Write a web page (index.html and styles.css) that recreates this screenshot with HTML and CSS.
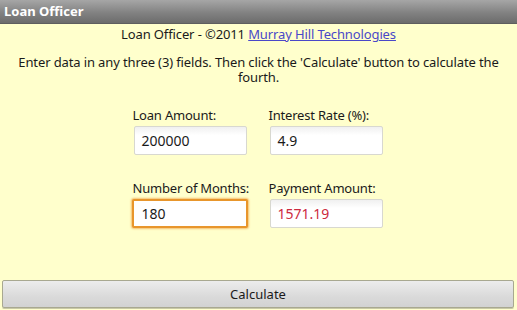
FILE: index.html
```html
<!DOCTYPE html>
<html>
<head>
<meta charset="utf-8">
<link rel="stylesheet" href="styles.css">
</head>
<body>
<div class="app">
  <header class="titlebar">Loan Officer</header>
  <main class="content">
    <p class="credit">Loan Officer - ©2011 <a class="link" href="#">Murray Hill Technologies</a></p>
    <p class="intro">Enter data in any three (3) fields. Then click the 'Calculate' button to calculate the fourth.</p>
    <div class="fields">
      <div class="field">
        <div class="label">Loan Amount:</div>
        <div class="box">200000</div>
      </div>
      <div class="field">
        <div class="label">Interest Rate (%):</div>
        <div class="box">4.9</div>
      </div>
      <div class="field">
        <div class="label">Number of Months:</div>
        <div class="box box-focus">180</div>
      </div>
      <div class="field">
        <div class="label">Payment Amount:</div>
        <div class="box box-result">1571.19</div>
      </div>
    </div>
  </main>
  <div class="actions">
    <button class="calc">Calculate</button>
  </div>
</div>
</body>
</html>
```

FILE: styles.css
```css
html, body {
  margin: 0;
  padding: 0;
}
body {
  background: #ffffcc;
  font-family: "Noto Sans", "Open Sans", "DejaVu Sans", sans-serif;
  font-size: 13px;
  letter-spacing: -0.12px;
  color: #1a1a1a;
}
.app {
  width: 517px;
  height: 310px;
  display: flex;
  flex-direction: column;
  overflow: hidden;
}
.titlebar {
  height: 24px;
  box-sizing: border-box;
  padding: 0 0 0 4px;
  background: linear-gradient(#a6a6a6, #828282 55%, #6c6c6c);
  color: #ffffff;
  font-weight: bold;
  font-size: 13px;
  letter-spacing: 0;
  line-height: 23px;
  border-bottom: 1px solid #5e5e5e;
}
.content {
  flex: 1;
  display: flex;
  flex-direction: column;
  align-items: center;
  padding-top: 2px;
}
.credit {
  margin: 0;
  line-height: 17px;
  text-align: center;
}
.link {
  color: #4a48c8;
  text-decoration: underline;
}
.intro {
  margin: 12px 14px 0;
  line-height: 15px;
  text-align: center;
}
.fields {
  margin-top: 22px;
  display: grid;
  grid-template-columns: 114px 114px;
  column-gap: 22px;
  row-gap: 25px;
  transform: translateX(-1px);
}
.field {
  display: flex;
  flex-direction: column;
  gap: 2px;
}
.label {
  line-height: 17px;
  white-space: nowrap;
  letter-spacing: -0.2px;
}
.box {
  height: 29px;
  box-sizing: border-box;
  margin-left: 1px;
  padding: 0 7px;
  background: linear-gradient(#f0f0f0, #ffffff 30%);
  border: 1px solid #d8d8d0;
  border-radius: 2px;
  font-size: 14px;
  letter-spacing: 0;
  line-height: 27px;
  color: #1a1a1a;
}
.box-focus {
  margin-left: -1px;
  margin-right: -1px;
  padding-left: 8px;
  border: 2px solid #e8962c;
  box-shadow: 0 0 2px 1px #f6c070;
  background: #ffffff;
  line-height: 25px;
}
.box-result {
  color: #cc2a40;
}
.actions {
  padding: 0 3px 2px 2px;
}
.calc {
  display: block;
  width: 100%;
  height: 28px;
  border: 1px solid #a8a890;
  border-radius: 2px;
  background: linear-gradient(#ececec, #dadada 60%, #d2d2d2);
  box-shadow: 0 1px 0 #c8c8a8;
  font-family: "Noto Sans", "Open Sans", "DejaVu Sans", sans-serif;
  font-size: 13px;
  color: #1a1a1a;
  padding: 0;
  line-height: 26px;
}
```
